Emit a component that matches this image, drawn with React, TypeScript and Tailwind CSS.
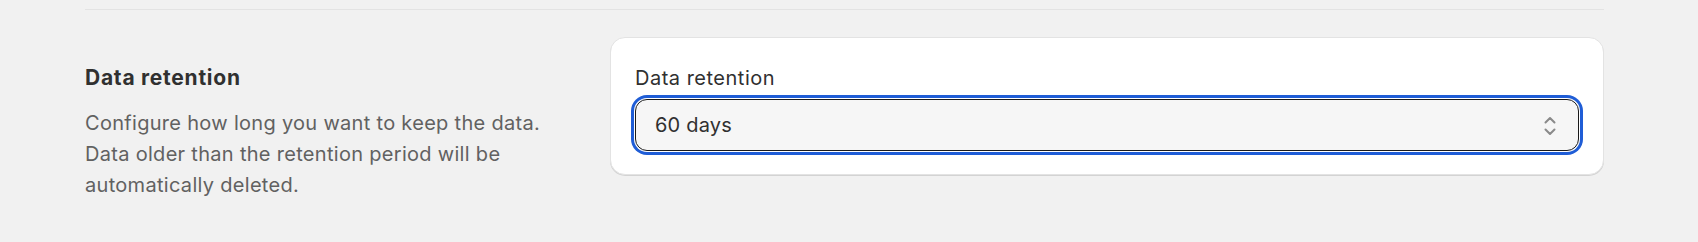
import React from "react";

export default function App() {
  return (
    <div className="min-h-[242px] w-full bg-[#f1f1f1] font-['Inter',_'Noto_Sans',_sans-serif] antialiased">
      <div className="pl-[85px] pr-[94px] pt-[9px]">
        <div className="h-px w-full bg-[#e3e3e3]" />
        <div className="mt-[27px] flex gap-[24px]">
          <div className="w-[501px] shrink-0 pt-[26px]">
            <h2 className="text-[21px] font-bold leading-[30px] tracking-[0.75px] text-[#303030]">Data retention</h2>
            <p className="mt-[15px] text-[20px] leading-[31px] tracking-[0.3px] text-[#616161]">
              Configure how long you want to keep the data.
              <br />
              Data older than the retention period will be
              <br />
              automatically deleted.
            </p>
          </div>
          <div className="h-[138px] w-[994px] shrink-0 self-start rounded-[15px] border border-[#e3e3e3] bg-white px-[24px] pt-[25px] pb-[23px] shadow-[0_1px_0_rgba(0,0,0,0.12)]">
            <label className="block text-[20px] leading-[30px] tracking-[0.5px] text-[#303030]">Data retention</label>
            <div className="mt-[6px] flex h-[52px] items-center justify-between rounded-[12px] border border-[#1a1a1a] bg-[#f6f6f6] pl-[19px] pr-[22px] shadow-[0_0_0_1px_#ffffff,0_0_0_4px_#1f5dd6]">
              <span className="text-[20px] leading-[30px] tracking-[0.2px] text-[#303030]">60 days</span>
              <svg width="12" height="20" viewBox="0 0 12 20" fill="none" className="mt-[1px]">
                <path d="M1.5 6.5 L6 2 L10.5 6.5" stroke="#8a8a8a" strokeWidth="2" strokeLinecap="round" strokeLinejoin="round" />
                <path d="M1.5 13.5 L6 18 L10.5 13.5" stroke="#8a8a8a" strokeWidth="2" strokeLinecap="round" strokeLinejoin="round" />
              </svg>
            </div>
          </div>
        </div>
      </div>
    </div>
  );
}
